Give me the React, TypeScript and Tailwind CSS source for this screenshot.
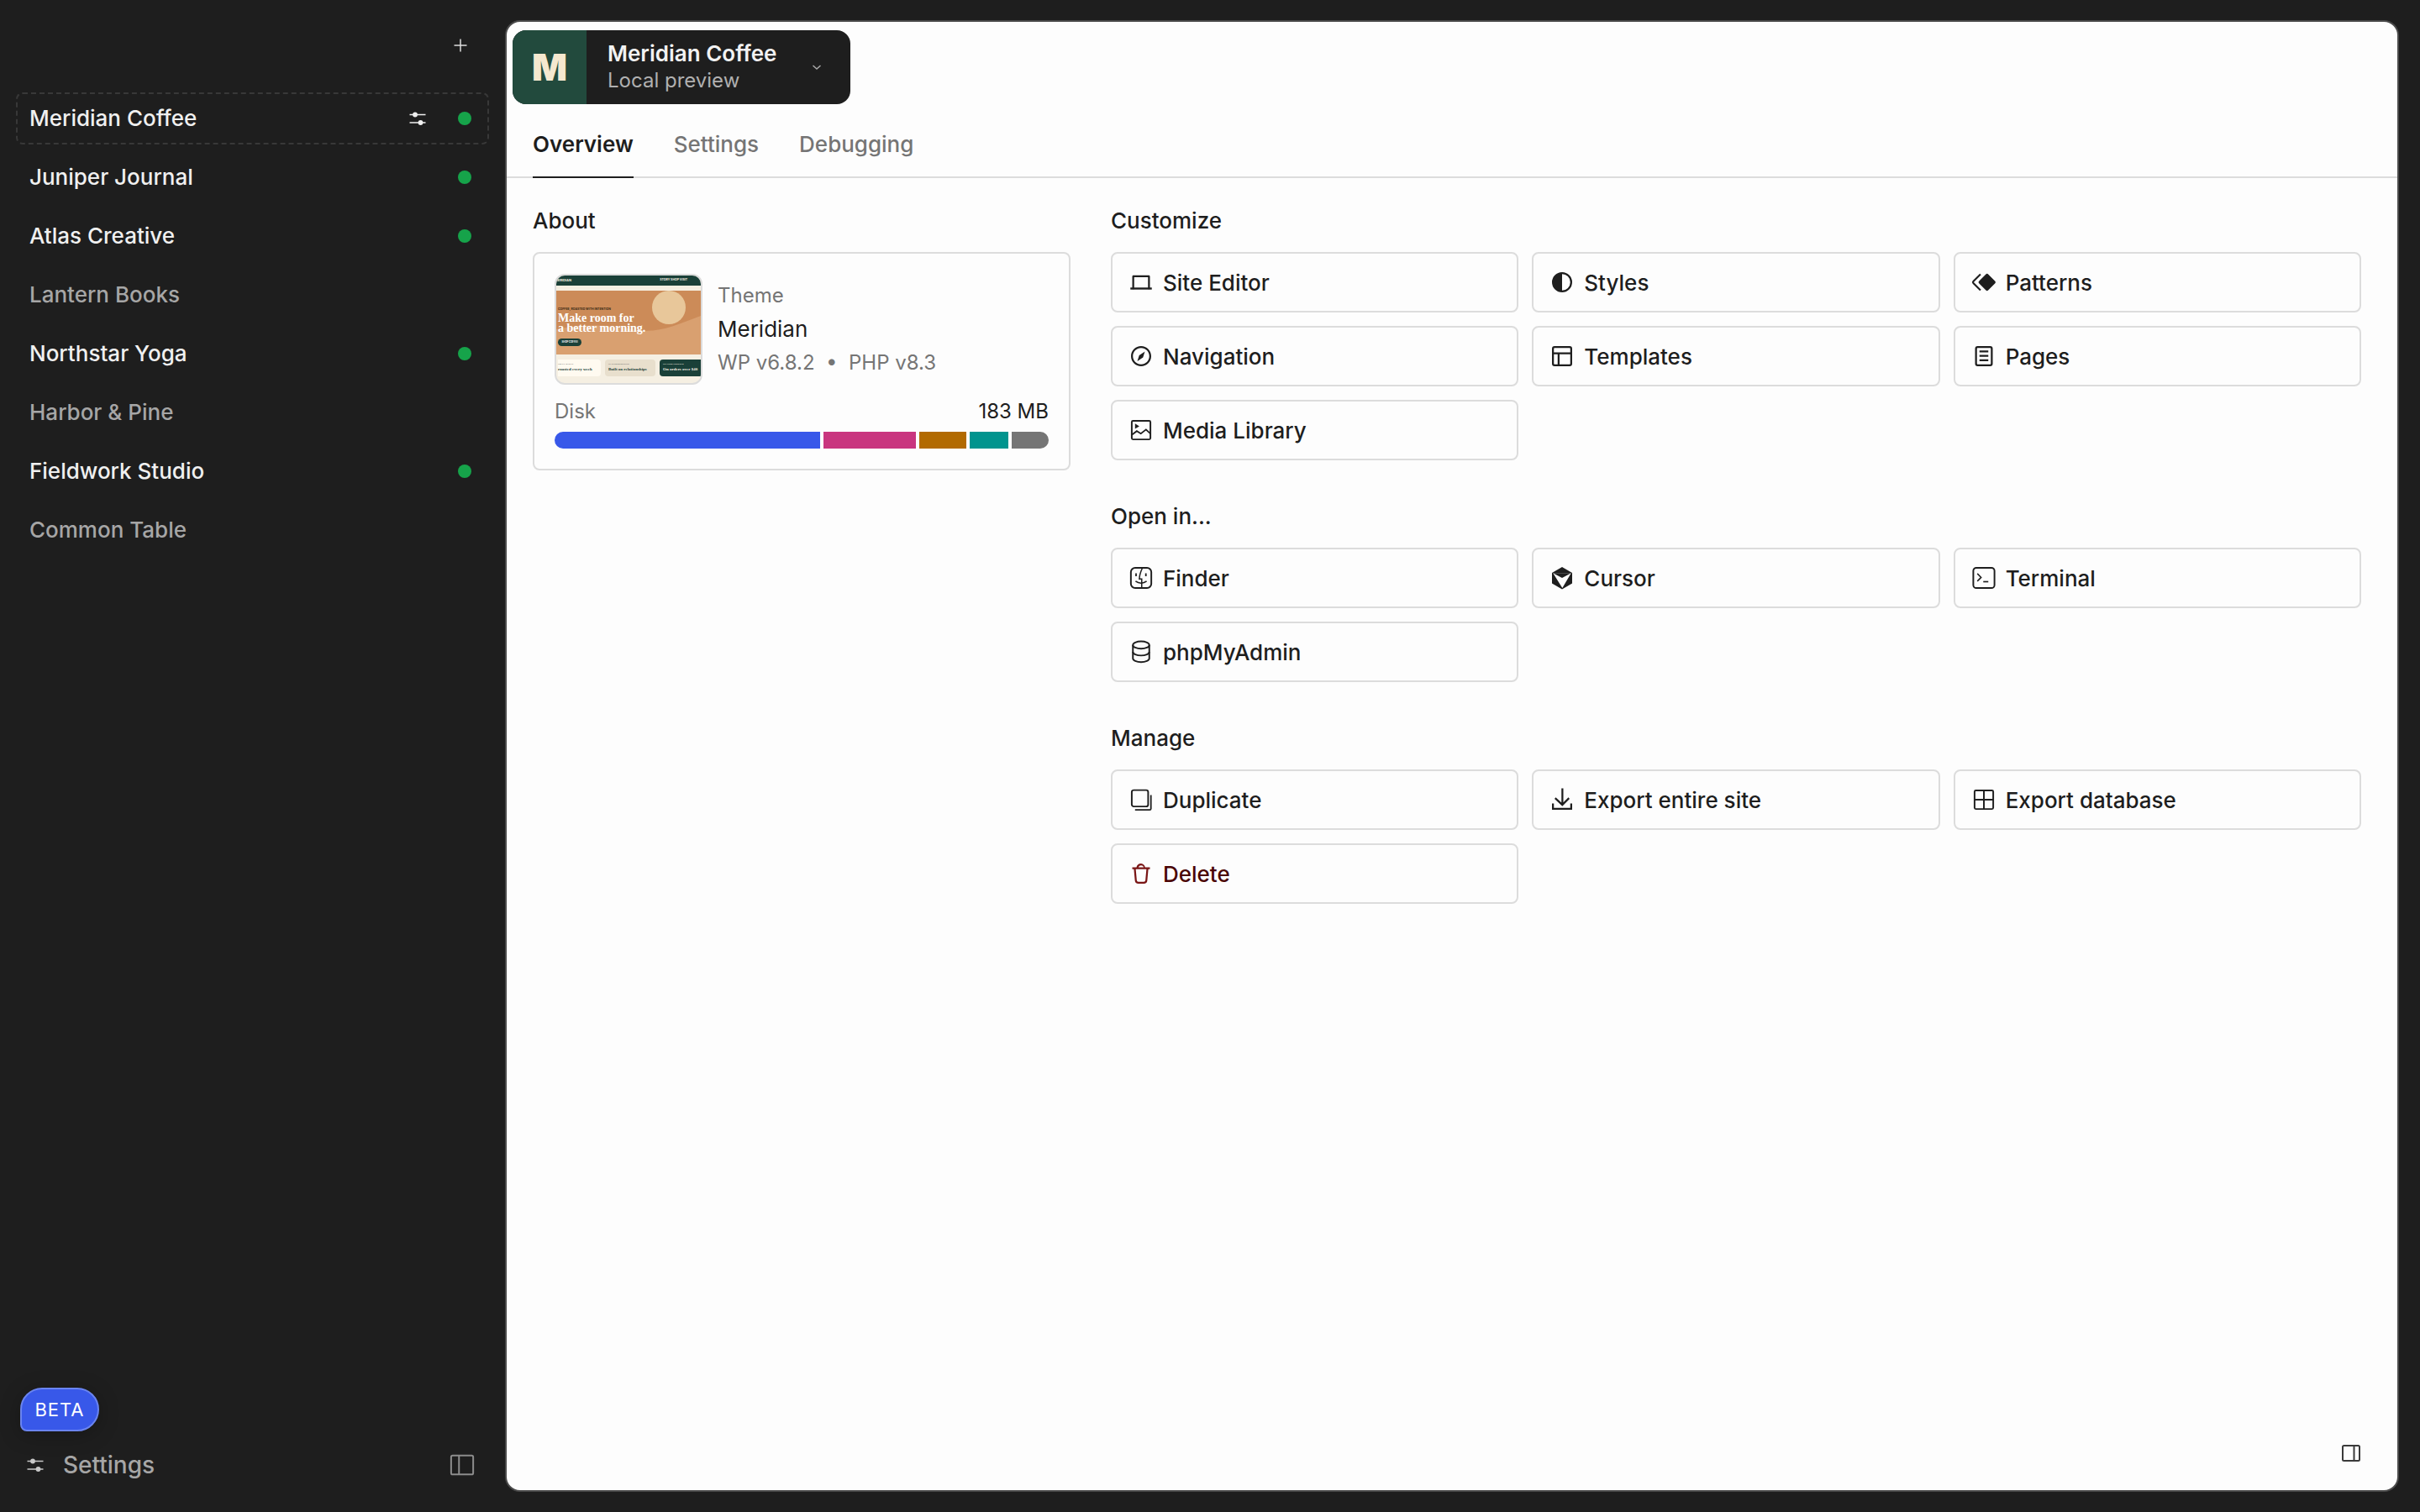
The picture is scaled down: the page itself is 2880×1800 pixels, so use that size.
import React from "react";

const FONT = "font-['Inter','Noto_Sans',sans-serif]";

type IconProps = { className?: string };

const Svg = ({ children, className = "" }: { children: React.ReactNode; className?: string }) => (
  <svg viewBox="0 0 24 24" className={`h-9 w-9 shrink-0 ${className}`} fill="currentColor" aria-hidden="true">
    {children}
  </svg>
);

const Laptop = () => (
  <Svg>
    <path d="M5 17.5V7.4c0-.5.4-.9.9-.9h12.2c.5 0 .9.4.9.9v10.1h-1.5V8H6.5v9.5H5Z" />
    <path d="M3.5 16.2h17v1.6h-17z" />
  </Svg>
);
const StylesIcon = () => (
  <Svg>
    <path
      fillRule="evenodd"
      clipRule="evenodd"
      d="M20 12a8 8 0 1 1-16 0 8 8 0 0 1 16 0Zm-1.5 0a6.5 6.5 0 0 1-6.5 6.5v-13a6.5 6.5 0 0 1 6.5 6.5Z"
    />
  </Svg>
);
const PatternsIcon = () => (
  <Svg>
    <path d="M13.6 5.6a1.3 1.3 0 0 1 1.8 0l5.5 5.5a1.3 1.3 0 0 1 0 1.8l-5.5 5.5a1.3 1.3 0 0 1-1.8 0l-5.5-5.5a1.3 1.3 0 0 1 0-1.8l5.5-5.5Z" />
    <path d="M9.3 5.6 3.6 11.3a1 1 0 0 0 0 1.4l5.7 5.7" fill="none" stroke="currentColor" strokeWidth="1.4" />
  </Svg>
);
const NavigationIcon = () => (
  <Svg>
    <path d="M12 4c-4.4 0-8 3.6-8 8s3.6 8 8 8 8-3.6 8-8-3.6-8-8-8zm0 14.5c-3.6 0-6.5-2.9-6.5-6.5S8.4 5.5 12 5.5s6.5 2.9 6.5 6.5-2.9 6.5-6.5 6.5zM9 16l4.5-3L15 8.4l-4.5 3L9 16z" />
  </Svg>
);
const TemplatesIcon = () => (
  <Svg>
    <path d="M18 5.5H6a.5.5 0 00-.5.5v3h13V6a.5.5 0 00-.5-.5zm.5 5H10v8h8a.5.5 0 00.5-.5v-7.5zm-10 0h-3V18a.5.5 0 00.5.5h2.5v-8zM6 4h12a2 2 0 012 2v12a2 2 0 01-2 2H6a2 2 0 01-2-2V6a2 2 0 012-2z" />
  </Svg>
);
const PagesIcon = () => (
  <Svg>
    <path d="M15.5 7.5h-7V9h7V7.5Zm-7 3.5h7v1.5h-7V11Zm7 3.5h-7V16h7v-1.5Z" />
    <path d="M17 4H7a2 2 0 0 0-2 2v12a2 2 0 0 0 2 2h10a2 2 0 0 0 2-2V6a2 2 0 0 0-2-2Zm-10 1.5h10a.5.5 0 0 1 .5.5v12a.5.5 0 0 1-.5.5H7a.5.5 0 0 1-.5-.5V6a.5.5 0 0 1 .5-.5Z" />
  </Svg>
);
const MediaIcon = () => (
  <Svg>
    <rect x="4.6" y="4.6" width="14.8" height="14.8" rx="1" fill="none" stroke="currentColor" strokeWidth="1.3" />
    <path d="M4.8 15.7 8.6 12.8l3.2 2 4.1-3.2 3.4 3.2" fill="none" stroke="currentColor" strokeWidth="1.2" />
    <path d="M7.2 6.8 10.6 9 7.2 11Z" />
  </Svg>
);
const FinderIcon = () => (
  <Svg>
    <rect x="3.9" y="4" width="16.2" height="16" rx="3.4" fill="none" stroke="currentColor" strokeWidth="1.3" />
    <path d="M13 4.2c-1.4 3-2.3 5.8-2.4 8.6h1.9V20" fill="none" stroke="currentColor" strokeWidth="1" />
    <path d="M7.6 14.6c2.6 2 6.2 2 8.8 0" fill="none" stroke="currentColor" strokeWidth="1" />
    <path d="M8 8.4v2.2M15.8 8.4v2.2" fill="none" stroke="currentColor" strokeWidth="1.2" />
  </Svg>
);
const CursorIcon = () => (
  <Svg>
    <path d="M12 3.4 20 8v8.4l-8 4.6-8-4.6V8l8-4.6Z" />
    <path d="M4.8 8.2h14.4L12.2 20Z" fill="#fdfdfd" />
    <path d="M19.2 8.2 12 12 4.8 8.2Z" />
  </Svg>
);
const TerminalIcon = () => (
  <Svg>
    <rect x="3.6" y="4" width="16.8" height="16" rx="2.4" fill="none" stroke="currentColor" strokeWidth="1.3" />
    <path d="m6.8 8.6 3 3-3 3" fill="none" stroke="currentColor" strokeWidth="1" />
    <path d="M11.5 15h4" fill="none" stroke="currentColor" strokeWidth="1.1" />
  </Svg>
);
const DatabaseIcon = () => (
  <Svg>
    <g fill="none" stroke="currentColor" strokeWidth="1.3">
      <ellipse cx="12" cy="6.6" rx="6.5" ry="2.9" />
      <path d="M5.5 6.6v10.6c0 1.6 2.9 2.9 6.5 2.9s6.5-1.3 6.5-2.9V6.6" />
      <path d="M5.5 12c0 1.6 2.9 2.9 6.5 2.9s6.5-1.3 6.5-2.9" />
    </g>
  </Svg>
);
const DuplicateIcon = () => (
  <Svg>
    <rect x="4.6" y="4.4" width="13" height="13" rx="1.6" fill="none" stroke="currentColor" strokeWidth="1.3" />
    <path d="M19.8 8.4v10.7a1 1 0 0 1-1 1H7.2" fill="none" stroke="currentColor" strokeWidth="1.2" />
  </Svg>
);
const DownloadIcon = () => (
  <Svg>
    <path d="M18 11.3l-1-1.1-4 4V3h-1.5v11.3L7 10.2l-1 1.1 6.2 5.8 5.8-5.8zm.5 3.7v3.5h-13V15H4v5h16v-5h-1.5z" />
  </Svg>
);
const TableIcon = () => (
  <Svg>
    <rect x="4.6" y="4.6" width="14.8" height="14.8" rx="1" fill="none" stroke="currentColor" strokeWidth="1.3" />
    <path d="M12 4.6v14.8M4.6 12h14.8" fill="none" stroke="currentColor" strokeWidth="1.3" />
  </Svg>
);
const TrashIcon = () => (
  <Svg>
    <path
      fillRule="evenodd"
      clipRule="evenodd"
      d="M12 5.5A2.25 2.25 0 0 0 9.878 7h4.244A2.251 2.251 0 0 0 12 5.5ZM12 4a3.751 3.751 0 0 0-3.675 3H5v1.5h1.27l.818 8.997a2.75 2.75 0 0 0 2.739 2.501h4.347a2.75 2.75 0 0 0 2.738-2.5L17.73 8.5H19V7h-3.825A3.751 3.751 0 0 0 12 4Zm4.224 4.5H7.776l.806 8.861a1.25 1.25 0 0 0 1.245 1.137h4.347a1.25 1.25 0 0 0 1.245-1.137l.805-8.861Z"
    />
  </Svg>
);

const Sliders = ({ className = "" }: IconProps) => (
  <svg viewBox="0 0 24 24" className={`h-6 w-6 shrink-0 ${className}`} fill="currentColor" aria-hidden="true">
    <path d="M2.5 6.7h19v1.6h-19zM2.5 16.2h19v1.6h-19z" />
    <circle cx="9" cy="7.5" r="2.9" />
    <circle cx="15.5" cy="17" r="2.9" />
  </svg>
);

type Action = { label: string; Icon: () => React.ReactElement; danger?: boolean };

const customize: Action[] = [
  { label: "Site Editor", Icon: Laptop },
  { label: "Styles", Icon: StylesIcon },
  { label: "Patterns", Icon: PatternsIcon },
  { label: "Navigation", Icon: NavigationIcon },
  { label: "Templates", Icon: TemplatesIcon },
  { label: "Pages", Icon: PagesIcon },
  { label: "Media Library", Icon: MediaIcon },
];
const openIn: Action[] = [
  { label: "Finder", Icon: FinderIcon },
  { label: "Cursor", Icon: CursorIcon },
  { label: "Terminal", Icon: TerminalIcon },
  { label: "phpMyAdmin", Icon: DatabaseIcon },
];
const manage: Action[] = [
  { label: "Duplicate", Icon: DuplicateIcon },
  { label: "Export entire site", Icon: DownloadIcon },
  { label: "Export database", Icon: TableIcon },
  { label: "Delete", Icon: TrashIcon, danger: true },
];

const sites = [
  { name: "Meridian Coffee", on: true, selected: true },
  { name: "Juniper Journal", on: true },
  { name: "Atlas Creative", on: true },
  { name: "Lantern Books", on: false },
  { name: "Northstar Yoga", on: true },
  { name: "Harbor & Pine", on: false },
  { name: "Fieldwork Studio", on: true },
  { name: "Common Table", on: false },
];

function Section({ title, items }: { title: string; items: Action[] }) {
  return (
    <section>
      <h2 className="mb-6 text-[26px] leading-[26px] font-medium text-[#1e1e1e]">{title}</h2>
      <div className="grid grid-cols-3 gap-4">
        {items.map(({ label, Icon, danger }) => (
          <button
            key={label}
            className={`flex h-[72px] items-center gap-2 rounded-lg border-2 border-[#dcdcdc] bg-transparent pl-4 text-[26px] font-medium ${
              danger ? "text-[#4a0505]" : "text-[#1e1e1e]"
            }`}
          >
            {danger ? (
              <span className="text-[#7a1616]">
                <Icon />
              </span>
            ) : (
              <Icon />
            )}
            <span>{label}</span>
          </button>
        ))}
      </div>
    </section>
  );
}

function Thumbnail() {
  return (
    <div className="flex h-[132px] w-[176px] shrink-0 flex-col overflow-hidden rounded-xl border-2 border-[#dcdcdc] bg-[#f5efe2]">
      <div className="flex h-3 shrink-0 items-center justify-between bg-[#1a4038] pr-4 text-[3.5px] font-bold text-[#f5efe2]">
        <span className="-ml-0.5 text-[4px]">MERIDIAN</span>
        <span>STORY SHOP VISIT</span>
      </div>
      <div className="relative mt-1.5 h-[76px] shrink-0 overflow-hidden bg-[#cc8b58]">
        <svg viewBox="0 0 172 76" className="absolute inset-0 h-full w-full" aria-hidden="true">
          <circle cx="134" cy="20" r="20" fill="#e8c79a" />
          <path d="M0 46C30 40 60 40 90 46c30 6 50-4 82-16v46H0Z" fill="#d9a070" />
        </svg>
        <div className="relative flex flex-col pt-5 pl-0.5 text-white">
          <span className="text-[3.5px] leading-[5px] font-bold text-[#3a2a15]">COFFEE, ROASTED WITH INTENTION</span>
          <span className="mt-0.5 font-['Liberation_Serif',serif] text-[14px] leading-[12px] font-bold whitespace-nowrap">
            Make room for
            <br />a better morning.
          </span>
          <span className="mt-1.5 flex h-[9px] w-7 items-center justify-end rounded-full bg-[#1a4038] pr-1 text-[2.8px] font-bold">
            SHOP COFFEE
          </span>
        </div>
      </div>
      <div className="mt-1.5 grid h-5 shrink-0 grid-cols-[51px_60px_51px] gap-[5px] pl-0.5 font-['Liberation_Serif',serif] text-[5px] font-bold">
        <div className="flex flex-col justify-center rounded-r-sm bg-[#fffaf0] text-[#1a4038]">
          <span className="text-[2.5px] text-[#777]">SMALL BATCH</span>
          <span>roasted every week</span>
        </div>
        <div className="flex flex-col justify-center rounded-sm bg-[#e8dfcd] pl-1 text-[#1a4038]">
          <span className="text-[2.5px] text-[#777]">IN NEIGHBORHOOD</span>
          <span>Built on relationships</span>
        </div>
        <div className="flex flex-col justify-center rounded-l-sm bg-[#1a4038] pl-1 text-[#f5efe2]">
          <span className="text-[2.5px]">ON YOUR SHIPPING</span>
          <span className="whitespace-nowrap">On orders over $40</span>
        </div>
      </div>
    </div>
  );
}

export default function App() {
  return (
    <div className={`flex h-[1800px] w-[2880px] overflow-hidden bg-[#1e1e1e] ${FONT}`}>
      <aside className="flex w-[601px] shrink-0 flex-col">
        <div className="flex h-[110px] shrink-0 items-start justify-end pt-[42px] pr-[41px] text-[#dddddd]">
          <svg viewBox="0 0 24 24" className="h-6 w-6" fill="none" stroke="currentColor" strokeWidth="1.5" aria-hidden="true">
            <path d="M12 4.5v15M4.5 12h15" />
          </svg>
        </div>
        <ul className="flex flex-col gap-2 px-[19px]">
          {sites.map((s) => (
            <li
              key={s.name}
              className={`flex h-[62px] items-center rounded-lg border-2 pr-[19px] pl-[14px] text-[26px] font-medium ${
                s.selected ? "border-dashed border-[#383838]" : "border-transparent"
              } ${s.on ? "text-[#f0f0f0]" : "text-[#a6a6a6]"}`}
            >
              <span className="-translate-y-px">{s.name}</span>
              <span className="flex-1" />
              {s.selected && <Sliders className="mr-[36px] -ml-1 text-[#f0f0f0]" />}
              {s.on && <span className="h-4 w-4 rounded-full bg-[#16a34a]" />}
            </li>
          ))}
        </ul>
        <div className="mt-auto flex flex-col">
          <span className="ml-6 flex h-[52px] w-[94px] items-center justify-center rounded-[26px] rounded-bl-lg border-2 border-[#6a84f0] bg-[#3858e9] text-[22px] tracking-[1px] text-white shadow-[0_4px_24px_rgba(0,0,0,0.25)]">
            BETA
          </span>
          <div className="mt-[20px] mb-[36px] flex h-[40px] items-center pr-[36px] pl-[30px] text-[26px] font-medium text-[#a6a6a6]">
            <Sliders className="text-[#c8c8c8]" />
            <span className="ml-[21px] flex-1 text-[28px]">Settings</span>
            <svg viewBox="0 0 24 24" className="h-[30px] w-[30px] text-[#8c8c8c]" fill="none" stroke="currentColor" strokeWidth="1.6" aria-hidden="true">
              <rect x="1.5" y="3" width="21" height="18" rx="1.5" />
              <path d="M9 3v18" />
            </svg>
          </div>
        </div>
      </aside>

      <main className="relative my-6 mr-[25px] flex min-w-0 flex-1 flex-col overflow-hidden rounded-[18px] border-2 border-[#4a4a4a] bg-[#fdfdfd]">
        <div className="mt-2.5 ml-[7px] flex h-[88px] w-[402px] shrink-0 items-stretch overflow-hidden rounded-2xl bg-[#1e1e1e]">
          <div className="flex w-[88px] shrink-0 items-center justify-center bg-[#224a3d] text-[44px] leading-none font-black text-[#f5e8cf]">
            M
          </div>
          <div className="flex flex-1 flex-col justify-center pl-[25px] leading-[32px]">
            <span className="text-[26px] font-semibold text-[#f2f2f2]">Meridian Coffee</span>
            <span className="text-[24px] text-[#b0b0b0]">Local preview</span>
          </div>
          <div className="flex items-center pr-[34px] text-[#a8a8a8]">
            <svg viewBox="0 0 12 12" className="h-3 w-3" fill="none" stroke="currentColor" strokeWidth="1.5" aria-hidden="true">
              <path d="m1.5 4 4.5 4 4.5-4" />
            </svg>
          </div>
        </div>

        <nav className="mt-[14px] flex h-[74px] shrink-0 gap-12 border-b-2 border-[#dcdcdc] pl-[31px] text-[26px]">
          <a className="-mb-0.5 flex items-center border-b-2 border-[#1e1e1e] pb-[6px] font-semibold text-[#1e1e1e]">Overview</a>
          <a className="flex items-center pb-[6px] font-medium text-[#757575]">Settings</a>
          <a className="flex items-center pb-[6px] font-medium text-[#757575]">Debugging</a>
        </nav>

        <div className="flex flex-1 gap-12 pt-[38px] pr-[43px] pl-[31px]">
          <section className="w-[640px] shrink-0">
            <h2 className="mb-6 text-[26px] leading-[26px] font-medium text-[#1e1e1e]">About</h2>
            <div className="rounded-lg border-2 border-[#dcdcdc] p-6">
              <div className="flex items-center gap-[18px]">
                <Thumbnail />
                <div className="flex flex-col text-[24px] leading-10 text-[#757575]">
                  <span>Theme</span>
                  <span className="text-[26px] text-[#1e1e1e]">Meridian</span>
                  <span>WP v6.8.2 &nbsp;•&nbsp; PHP v8.3</span>
                </div>
              </div>
              <div className="mt-[18px] flex justify-between text-[24px] leading-7">
                <span className="text-[#757575]">Disk</span>
                <span className="text-[#1e1e1e]">183 MB</span>
              </div>
              <div className="mt-2.5 flex h-5 gap-1 overflow-hidden rounded-[10px]">
                <div className="w-[316px] bg-[#3858e9]" />
                <div className="w-[110px] bg-[#c9357f]" />
                <div className="w-[56px] bg-[#b26a00]" />
                <div className="w-[46px] bg-[#00948e]" />
                <div className="flex-1 bg-[#757575]" />
              </div>
            </div>
          </section>
          <div className="flex min-w-0 flex-1 flex-col gap-[54px]">
            <Section title="Customize" items={customize} />
            <Section title="Open in..." items={openIn} />
            <Section title="Manage" items={manage} />
          </div>
        </div>

        <div className="flex shrink-0 justify-end pr-[44px] pb-[34px] text-[#3a3a3a]">
          <svg viewBox="0 0 22 20" className="h-5 w-[22px]" fill="none" stroke="currentColor" strokeWidth="2" aria-hidden="true">
            <rect x="1" y="1" width="20" height="18" rx="1.5" />
            <path d="M14.5 1v18" />
          </svg>
        </div>
      </main>
    </div>
  );
}
